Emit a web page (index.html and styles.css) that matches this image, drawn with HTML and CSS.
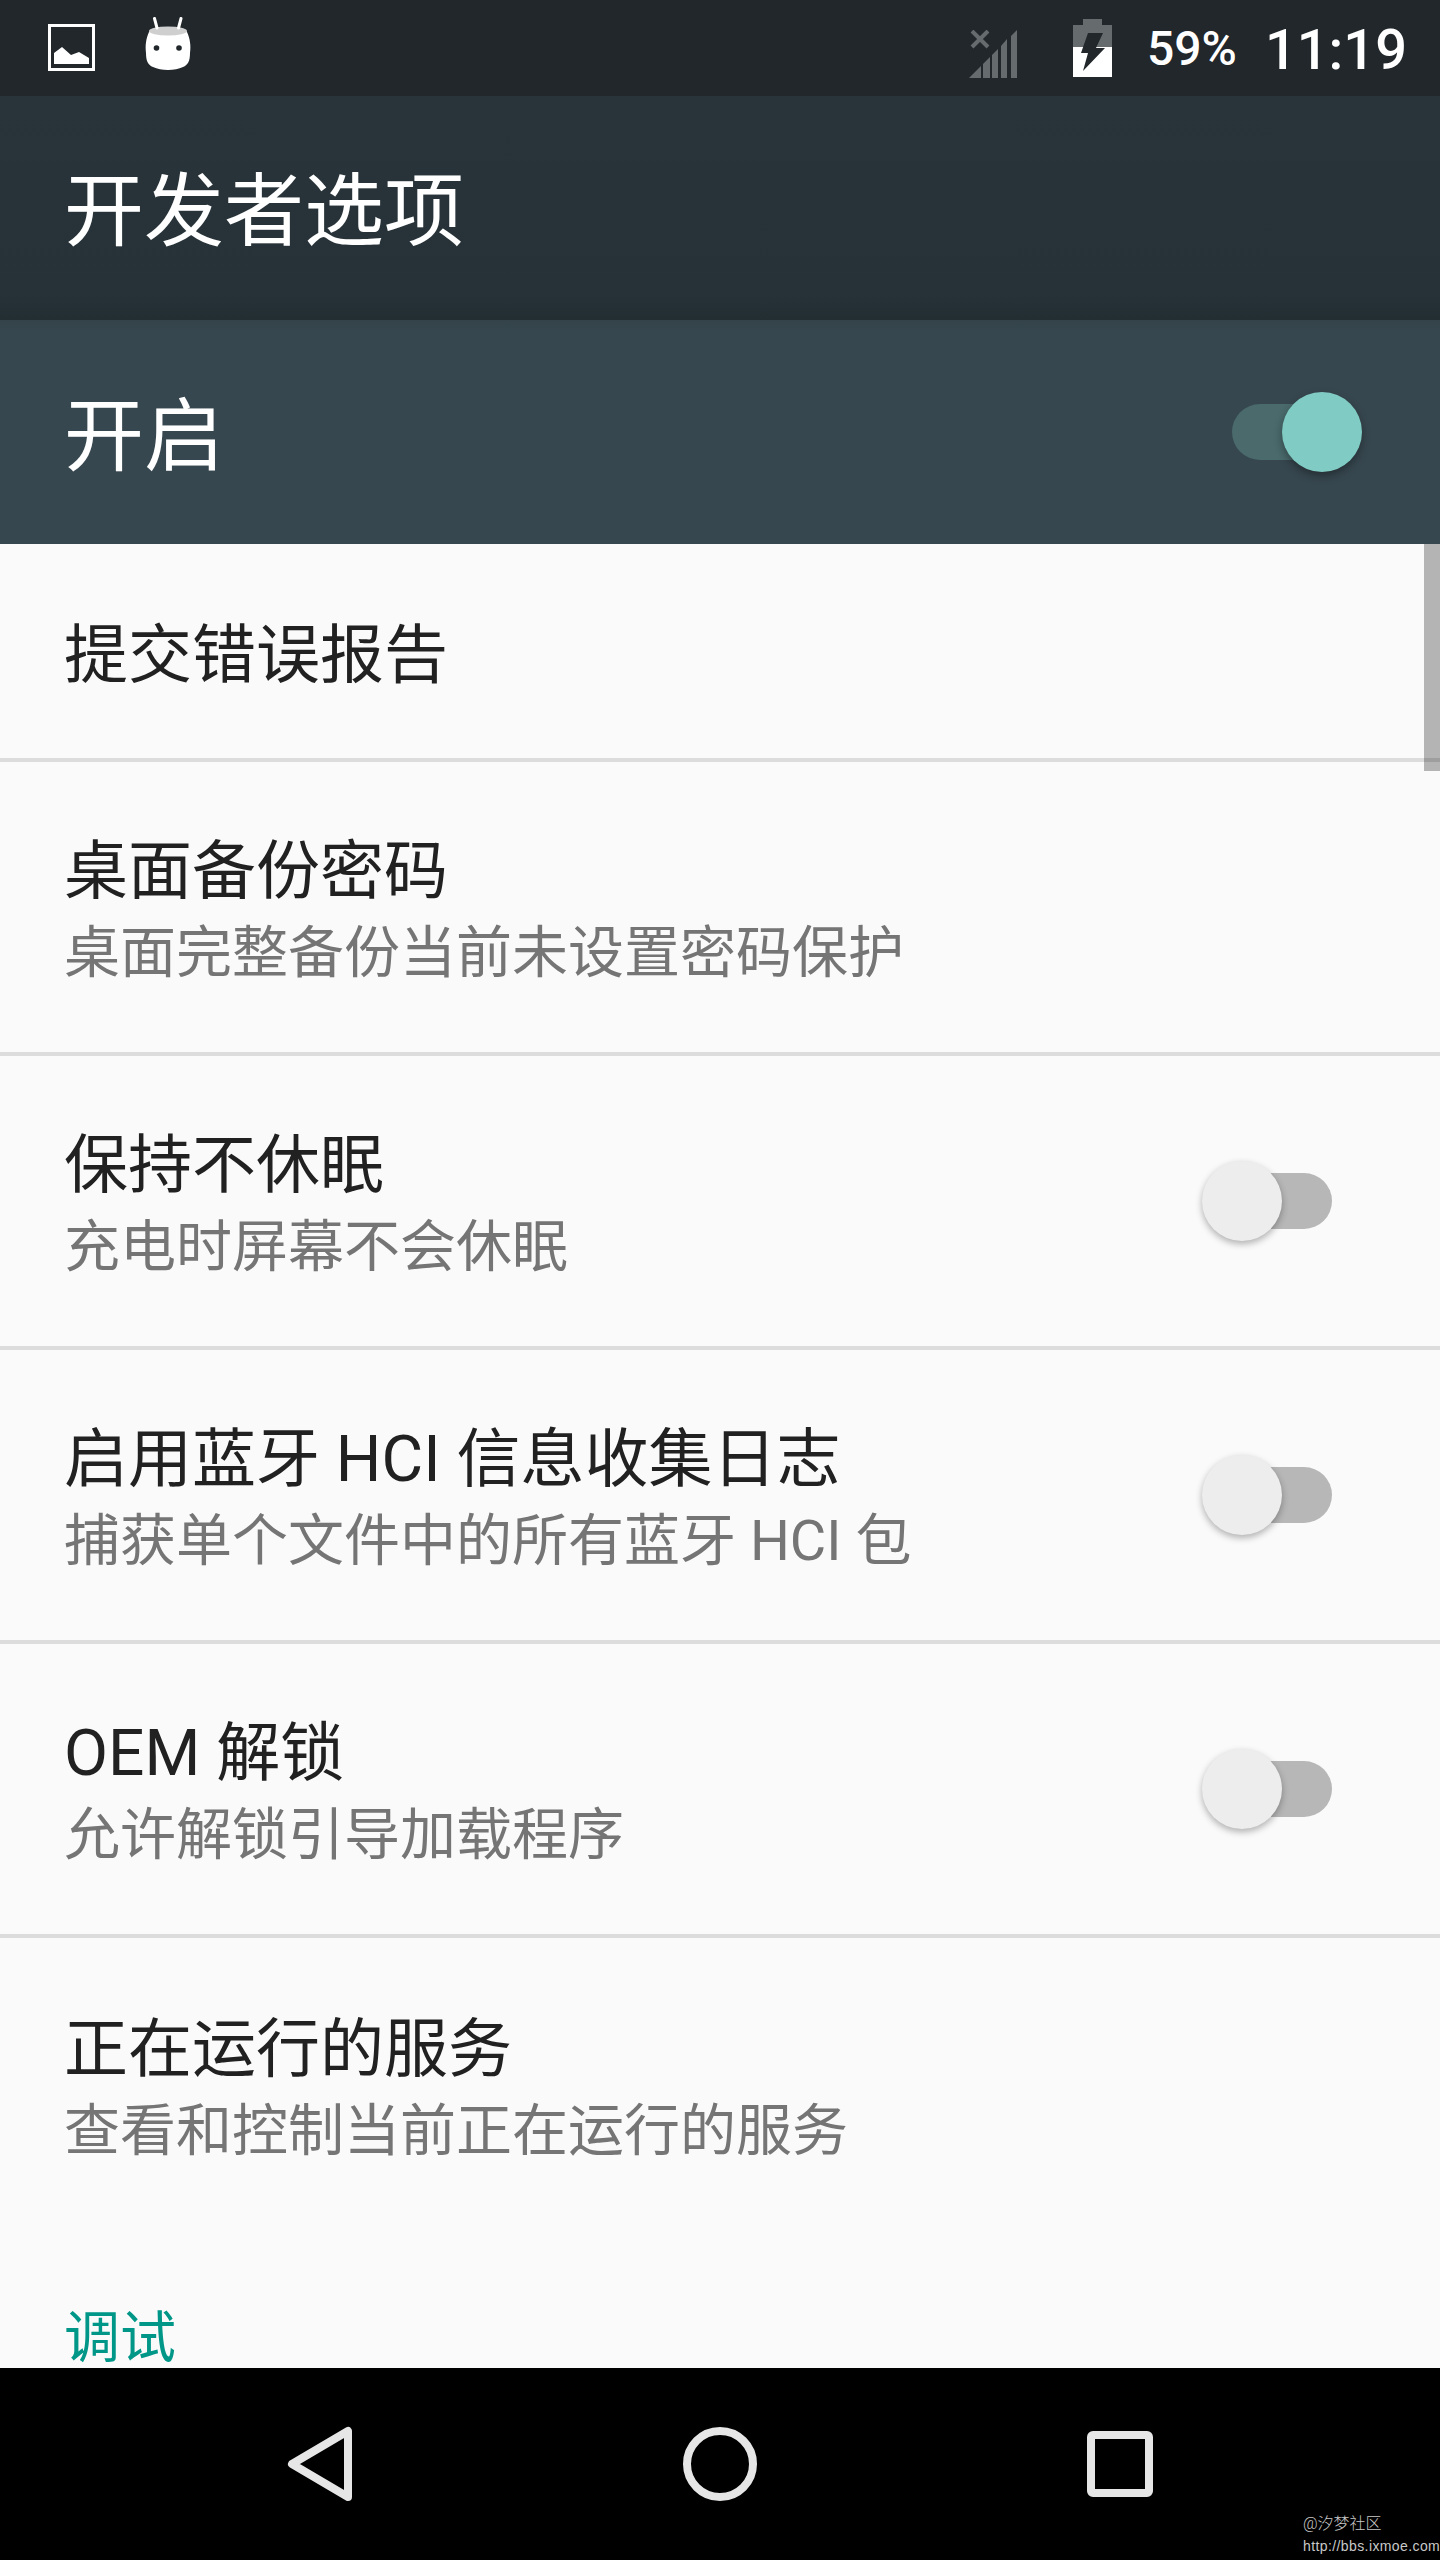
FILE: index.html
```html
<!DOCTYPE html>
<html lang="zh-CN">
	<head>
		<meta charset="utf-8">
		<title>开发者选项</title>
		<link rel="stylesheet" href="styles.css">
	</head>
	<body>
		<div class="screen">

			<div class="statusbar">
				<div class="status-left">
					<svg class="ic-image" width="48" height="48" viewBox="0 0 48 48">
						<rect x="1.5" y="1.5" width="44" height="44" fill="none" stroke="#fff" stroke-width="3" />
						<polygon fill="#fff" points="6,40 6,29 14,23 23,31 31,28 41,34 41,40" />
					</svg>
					<svg class="ic-android" width="46" height="54" viewBox="0 0 46 54">
						<path fill="#fff" d="M23 10C33 10 41 11 42 15C45 22 46 28 45 36C45 44 43 48 38 50C30 54 16 54 8 50C3 48 1 44 1 36C0 28 1 22 4 15C5 11 13 10 23 10Z" />
						<ellipse cx="23" cy="14" rx="19" ry="4.5" fill="#cfcfcf" />
						<path stroke="#fff" stroke-width="3" stroke-linecap="round" d="M9.5 1.5L12 11M36 1.5L33.500 11" />
						<circle cx="11.5" cy="31" r="2.800" fill="#21272b" />
						<circle cx="34" cy="31" r="2.800" fill="#21272b" />
					</svg>
				</div>
				<div class="status-right">
					<svg class="ic-signal" width="48" height="48" viewBox="0 0 48 48" fill="#666b6e">
						<polygon points="0,48 12,36 12,48" />
						<polygon points="14,48 14,34 21,27 21,48" />
						<polygon points="23,48 23,25 29,19 29,48" />
						<polygon points="32,48 32,16 38,9 38,48" />
						<polygon points="42,48 42,6 48,0 48,48" />
						<path stroke="#666b6e" stroke-width="4" d="M3 1L19 17M19 1L3 17" />
					</svg>
					<svg class="ic-battery" width="39" height="58" viewBox="0 0 39 58">
						<path fill="#666b6e" d="M10 0H29V6H39V28H0V6H10Z" />
						<rect y="28" width="39" height="30" fill="#fff" />
						<polygon fill="#21272b" points="15,14 30,14 23,29 32,29 10,52 15,34 8,34" />
					</svg>
					<span class="battery-pct">59%</span>
					<span class="clock">11:19</span>
				</div>
			</div>

			<div class="toolbar">开发者选项</div>

			<div class="master">
				<span class="master-label">开启</span>
				<div class="switch switch-on"><i></i></div>
			</div>

			<div class="list">
				<div class="scrollbar"></div>

				<div class="row row-short">
					<div class="row-text">
						<div class="row-title">提交错误报告</div>
					</div>
				</div>

				<div class="row">
					<div class="row-text">
						<div class="row-title">桌面备份密码</div>
						<div class="row-sub">桌面完整备份当前未设置密码保护</div>
					</div>
				</div>

				<div class="row">
					<div class="row-text">
						<div class="row-title">保持不休眠</div>
						<div class="row-sub">充电时屏幕不会休眠</div>
					</div>
					<div class="switch"><i></i></div>
				</div>

				<div class="row">
					<div class="row-text">
						<div class="row-title">启用蓝牙 HCI 信息收集日志</div>
						<div class="row-sub">捕获单个文件中的所有蓝牙 HCI 包</div>
					</div>
					<div class="switch"><i></i></div>
				</div>

				<div class="row">
					<div class="row-text">
						<div class="row-title">OEM 解锁</div>
						<div class="row-sub">允许解锁引导加载程序</div>
					</div>
					<div class="switch"><i></i></div>
				</div>

				<div class="row row-last">
					<div class="row-text">
						<div class="row-title">正在运行的服务</div>
						<div class="row-sub">查看和控制当前正在运行的服务</div>
					</div>
				</div>

				<div class="section">调试</div>
			</div>

			<div class="navbar">
				<svg width="72" height="82" viewBox="0 0 72 82">
					<path fill="none" stroke="#e6e6e6" stroke-width="8" stroke-linejoin="round" d="M64 8V74L8 41Z" />
				</svg>
				<svg class="nav-home" width="74" height="74" viewBox="0 0 74 74">
					<circle cx="37" cy="37" r="33" fill="none" stroke="#e6e6e6" stroke-width="8" />
				</svg>
				<svg width="66" height="66" viewBox="0 0 66 66">
					<rect x="4" y="4" width="58" height="58" rx="2" fill="none" stroke="#e6e6e6" stroke-width="8" />
				</svg>
				<div class="watermark">
					<div class="wm-name">@汐梦社区</div>
					<div class="wm-url">http://bbs.ixmoe.com</div>
				</div>
			</div>

		</div>
	</body>
</html>
```
FILE: styles.css
```css
body { margin:0; background:#000; font-family:Roboto, "Noto Sans CJK SC", sans-serif; }

.screen { width:1440px; height:2560px; display:flex; flex-direction:column; }

/* status bar */
.statusbar { height:96px; flex:none; background:#21272b; display:flex; justify-content:space-between; color:#fff; font-weight:500; }
.status-left { display:flex; align-items:flex-start; padding-left:48px; }
.ic-image { margin-top:24px; }
.ic-android { margin-top:17px; margin-left:49px; }
.status-right { display:flex; align-items:flex-start; padding-right:33px; }
.ic-signal { margin-top:30px; }
.ic-battery { margin-top:19px; margin-left:56px; }
.battery-pct { font-size:48px; line-height:98px; margin-left:35px; }
.clock { font-size:56px; line-height:100px; margin-left:28px; }

/* headers */
.toolbar { height:224px; flex:none; box-sizing:border-box; padding-left:64px; color:#fff; font-size:80px; line-height:232px;
	background:linear-gradient(#28343a, #263238 88%, #232e33); }
.master { height:224px; flex:none; box-sizing:border-box; padding:0 78px 0 64px; display:flex; align-items:center; justify-content:space-between; color:#fff; font-size:80px;
	background:linear-gradient(#34434a, #37474f 12px); }
.master-label { margin-bottom:6px; }

/* switches */
.switch { width:130px; height:80px; position:relative; flex:none; }
.switch::before { content:""; position:absolute; right:0; top:12px; width:112px; height:56px; border-radius:28px; background:#b7b7b7; }
.switch i { position:absolute; left:0; top:0; width:80px; height:80px; border-radius:50%; background:#ededed; box-shadow:0 3px 7px rgba(0,0,0,.3); }
.switch-on::before { left:0; right:auto; background:#4a6a6c; }
.switch-on i { left:auto; right:0; background:#80cbc4; box-shadow:0 4px 9px rgba(0,0,0,.35); }

/* list */
.list { flex:1; min-height:0; background:#fafafa; position:relative; }
.scrollbar { position:absolute; right:0; top:0; width:16px; height:227px; background:rgba(0,0,0,.28); }
.row { height:294px; box-sizing:border-box; border-bottom:4px solid #dcdcdc; padding:0 108px 0 64px; display:flex; align-items:center; justify-content:space-between; }
.row-short { height:218px; }
.row-last { border-bottom:none; }
.row-text { padding-top:10px; }
.row-title { font-size:64px; line-height:82px; color:#212121; }
.row-sub { font-size:56px; line-height:80px; color:#757575; }
.section { font-size:56px; line-height:60px; padding-left:64px; margin-top:76px; color:#009688; }

/* navigation */
.navbar { height:192px; flex:none; background:#000; position:relative; display:flex; align-items:center; padding:0 287px 0 284px; justify-content:space-between; }
.nav-home { margin-right:3px; }
.watermark { position:absolute; left:1303px; top:144px; color:#c8c8c8; white-space:nowrap; }
.wm-name { font-size:16px; line-height:24px; font-weight:300; }
.wm-url { font-family:"Liberation Sans", sans-serif; font-size:14px; line-height:20px; letter-spacing:0.4px; }
```
